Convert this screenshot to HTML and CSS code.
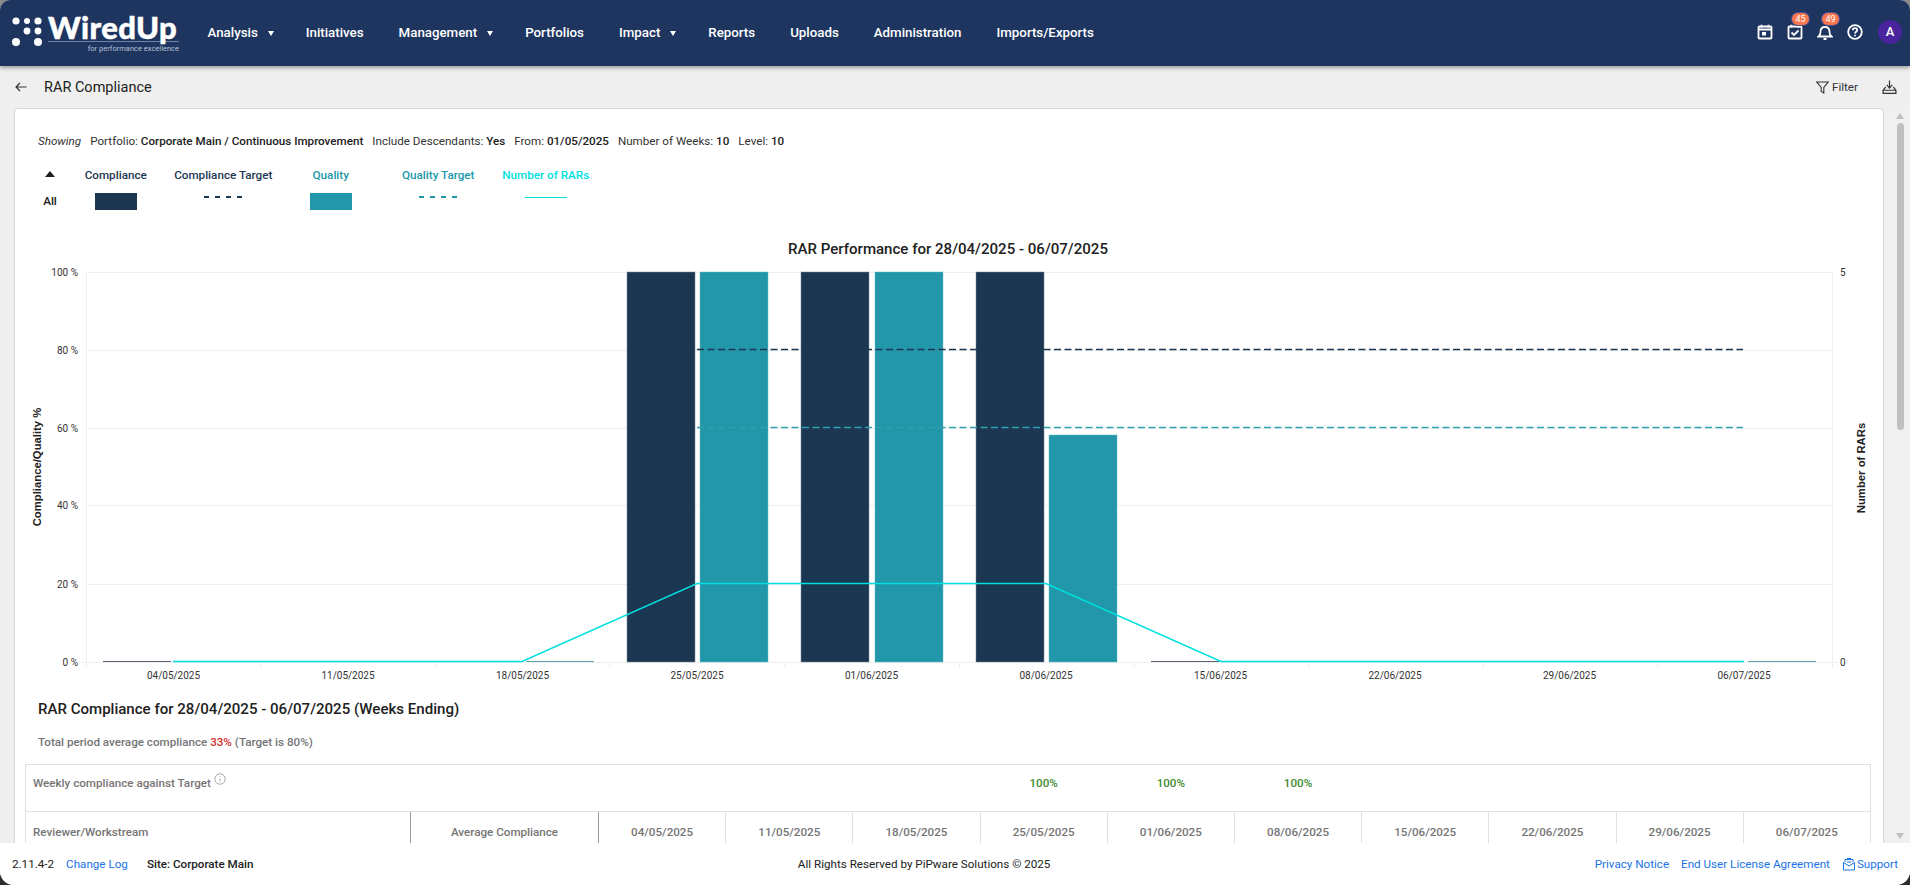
FILE: index.html
```html
<!DOCTYPE html>
<html lang="en">
<head>
<meta charset="utf-8">
<title>RAR Compliance</title>
<link rel="stylesheet" href="styles.css">
</head>
<body>
<div class="app">
  <header class="topbar">
    <div class="logo">
      <svg class="logo-dots" viewBox="0 0 34 30" width="34" height="30">
        <circle cx="4" cy="4" r="3.6"/><circle cx="15" cy="4" r="3"/><circle cx="26" cy="4" r="3.6"/>
        <circle cx="15" cy="14" r="3.4"/><circle cx="26" cy="14" r="3.4"/>
        <circle cx="4" cy="25" r="4"/><circle cx="26" cy="25" r="4"/>
      </svg>
      <div class="logo-text">
        <div class="logo-name">WiredUp</div>
        <div class="logo-tag">for performance excellence</div>
      </div>
    </div>
    <nav class="nav">
      <a class="nav-item">Analysis<span class="caret"></span></a>
      <a class="nav-item">Initiatives</a>
      <a class="nav-item">Management<span class="caret"></span></a>
      <a class="nav-item">Portfolios</a>
      <a class="nav-item">Impact<span class="caret"></span></a>
      <a class="nav-item">Reports</a>
      <a class="nav-item">Uploads</a>
      <a class="nav-item">Administration</a>
      <a class="nav-item">Imports/Exports</a>
    </nav>
    <div class="top-icons">
      <svg class="ticon" viewBox="0 0 16 16" width="16" height="16"><rect x="1.5" y="2.5" width="13" height="12" rx="1"/><path d="M1.5 5.5h13M4.5 .8v3M11.5 .8v3"/><rect class="fill" x="5" y="8" width="4" height="3.5"/></svg>
      <div class="icon-wrap">
        <svg class="ticon" viewBox="0 0 16 16" width="16" height="16"><rect x="1.5" y="2.5" width="13" height="12" rx="1"/><path d="M4.5 .8v3M11.5 .8v3M4.5 8.5l2.5 2.500 4.500-4.500"/></svg>
        <span class="badge">45</span>
      </div>
      <div class="icon-wrap">
        <svg class="ticon" viewBox="0 0 16 16" width="16" height="16"><path d="M1.500 12.500c1.500-1 2-2.500 2-4.500 0-3 1.800-5 4.500-5s4.500 2 4.500 5c0 2 .5 3.500 2 4.500zM6.500 15h3"/></svg>
        <span class="badge">49</span>
      </div>
      <svg class="ticon" viewBox="0 0 16 16" width="16" height="16"><circle cx="8" cy="8" r="6.800"/><path d="M5.800 6.200c0-1.300 1-2.100 2.200-2.100s2.200.8 2.200 2c0 1.700-2.200 1.700-2.200 3.400M8 10.800v1.500"/></svg>
      <div class="avatar">A</div>
    </div>
  </header>

  <div class="subbar">
    <svg class="back" viewBox="0 0 12 10" width="12" height="10"><path d="M11.500 5H1M5 1L1 5l4 4"/></svg>
    <h1 class="page-title">RAR Compliance</h1>
    <div class="sub-actions">
      <span class="filter">
        <svg class="sicon" viewBox="0 0 13 13" width="13" height="13"><path d="M.8 1h11.400L7.800 6.500V12L5.200 10.500V6.500z"/></svg>
        Filter
      </span>
      <svg class="sicon sicon-dl" viewBox="0 0 14 13" width="15" height="14"><path d="M7 .5v6M4.500 4.500L7 7.500l2.500-3M3.500 6.500L1 9.500v3h12v-3l-2.500-3M1 9.500h12"/></svg>
    </div>
  </div>

  <main class="main">
    <section class="card">
      <div class="showing">
        <em>Showing</em>
        <span>Portfolio: <b>Corporate Main / Continuous Improvement</b></span>
        <span>Include Descendants: <b>Yes</b></span>
        <span>From: <b>01/05/2025</b></span>
        <span>Number of Weeks: <b>10</b></span>
        <span>Level: <b>10</b></span>
      </div>

      <div class="legend">
        <div class="lg-head"><span class="tri"></span></div>
        <div class="lg-head c-dark">Compliance</div>
        <div class="lg-head c-dark">Compliance Target</div>
        <div class="lg-head c-teal">Quality</div>
        <div class="lg-head c-teal">Quality Target</div>
        <div class="lg-head c-cyan">Number of RARs</div>
        <div class="lg-cell lg-all">All</div>
        <div class="lg-cell"><span class="swatch bg-dark"></span></div>
        <div class="lg-cell lg-line"><span class="dash dash-dark"></span></div>
        <div class="lg-cell"><span class="swatch bg-teal"></span></div>
        <div class="lg-cell lg-line"><span class="dash dash-teal"></span></div>
        <div class="lg-cell lg-line"><span class="solid"></span></div>
      </div>

      <svg class="chart" viewBox="15 230 1868 460" width="1868" height="460">
        <text class="ch-title" x="948" y="254" text-anchor="middle">RAR Performance for 28/04/2025 - 06/07/2025</text>

        <g class="grid">
          <path d="M86 272.500H1832M86 350.500H1832M86 428.500H1832M86 505.500H1832M86 584.500H1832M82 662.500H1838"/>
          <path d="M86.500 272V662M1832.500 272V662"/>
          <path d="M86.500 662v6M261 662v6M435.500 662v6M610 662v6M785 662v6M959.500 662v6M1134 662v6M1309 662v6M1483 662v6M1657.500 662v6M1832.500 662v6"/>
        </g>

        <g class="tick-y">
          <text x="78" y="275.500">100 %</text>
          <text x="78" y="353.500">80 %</text>
          <text x="78" y="431.500">60 %</text>
          <text x="78" y="508.500">40 %</text>
          <text x="78" y="587.500">20 %</text>
          <text x="78" y="665.500">0 %</text>
        </g>
        <g class="tick-r">
          <text x="1840" y="275.500">5</text>
          <text x="1840" y="665.500">0</text>
        </g>
        <text class="ax-title" transform="translate(41 467) rotate(-90)" text-anchor="middle">Compliance/Quality %</text>
        <text class="ax-title" transform="translate(1865 468) rotate(-90)" text-anchor="middle">Number of RARs</text>

        <g class="zero-dark">
          <path d="M103 661.500h68M278 661.500h68M452 661.500h68M1151 661.500h68M1325 661.500h68M1500 661.500h68M1675 661.500h68"/>
        </g>
        <g class="zero-teal">
          <path d="M176 661.500h68M351 661.500h68M526 661.500h68M1224 661.500h68M1399 661.500h68M1573 661.500h68M1748 661.500h68"/>
        </g>

        <g class="bar-dark">
          <rect x="627" y="272" width="68" height="390"/>
          <rect x="801" y="272" width="68" height="390"/>
          <rect x="976" y="272" width="68" height="390"/>
        </g>
        <g class="bar-teal">
          <rect x="700" y="272" width="68" height="390"/>
          <rect x="875" y="272" width="68" height="390"/>
          <rect x="1049" y="435" width="68" height="227"/>
        </g>

        <path class="tgt-dark" d="M697 349.500H1743"/>
        <path class="tgt-teal" d="M697 427.500H1743"/>
        <path class="rars" d="M173 661.500H522L697 583.500H1046L1221 661.500H1744"/>

        <g class="tick-x">
          <text x="173.500" y="679">04/05/2025</text>
          <text x="348" y="679">11/05/2025</text>
          <text x="522.500" y="679">18/05/2025</text>
          <text x="697" y="679">25/05/2025</text>
          <text x="871.500" y="679">01/06/2025</text>
          <text x="1046" y="679">08/06/2025</text>
          <text x="1220.500" y="679">15/06/2025</text>
          <text x="1395" y="679">22/06/2025</text>
          <text x="1569.500" y="679">29/06/2025</text>
          <text x="1744" y="679">06/07/2025</text>
        </g>
      </svg>

      <h2 class="heading">RAR Compliance for 28/04/2025 - 06/07/2025 (Weeks Ending)</h2>
      <p class="summary">Total period average compliance <span class="red">33%</span> (Target is 80%)</p>

      <table class="tbl">
        <colgroup>
          <col class="col-a"><col class="col-b">
          <col class="col-d"><col class="col-d"><col class="col-d"><col class="col-d"><col class="col-d">
          <col class="col-d"><col class="col-d"><col class="col-d"><col class="col-d"><col class="col-d">
        </colgroup>
        <tr class="row-weekly">
          <td colspan="5" class="left">Weekly compliance against Target
            <svg class="info" viewBox="0 0 12 12" width="12" height="12"><circle cx="6" cy="6" r="5.200"/><path d="M6 5.500v3.200M6 3.200v1"/></svg>
          </td>
          <td class="pct">100%</td><td class="pct">100%</td><td class="pct">100%</td>
          <td></td><td></td><td></td><td></td>
        </tr>
        <tr class="row-head">
          <th class="left strong-r">Reviewer/Workstream</th>
          <th class="strong-r">Average Compliance</th>
          <th>04/05/2025</th><th>11/05/2025</th><th>18/05/2025</th><th>25/05/2025</th><th>01/06/2025</th>
          <th>08/06/2025</th><th>15/06/2025</th><th>22/06/2025</th><th>29/06/2025</th><th>06/07/2025</th>
        </tr>
      </table>
    </section>
    <div class="scrollbar">
      <span class="sb-up"></span>
      <span class="sb-thumb"></span>
      <span class="sb-down"></span>
    </div>
  </main>

  <footer class="footer">
    <div class="f-left">
      <span>2.11.4-2</span>
      <a class="link">Change Log</a>
      <b>Site: Corporate Main</b>
    </div>
    <div>All Rights Reserved by PiPware Solutions © 2025</div>
    <div class="f-right">
      <a class="link">Privacy Notice</a>
      <a class="link">End User License Agreement</a>
      <a class="link support">
        <svg class="sup-icon" viewBox="0 0 14 14" width="14" height="14"><path d="M3 5V2.500h8V5M1.500 5.500L7 9l5.500-3.500V13h-11zM5 1.500h4M5 5h4"/></svg>Support
      </a>
    </div>
  </footer>
</div>
</body>
</html>
```

FILE: styles.css
```css
* { box-sizing: border-box; }
html, body { margin: 0; height: 100%; overflow: hidden; }
body {
  background: linear-gradient(#8a8a8a 0, #8a8a8a 50%, #2e2e2e 50%);
  font-family: Roboto, "Liberation Sans", sans-serif;
  font-size: 11.650px;
  color: #212121;
}
.app {
  height: 885px;
  display: flex;
  flex-direction: column;
  background: #efefef;
  border-radius: 10px 10px 14px 14px;
  overflow: hidden;
}

/* top bar */
.topbar {
  flex: 0 0 66px;
  height: 66px;
  background: #1e3560;
  color: #fff;
  display: flex;
  align-items: center;
  box-shadow: 0 2px 4px rgba(0,0,0,.35);
  position: relative;
  z-index: 2;
  padding-right: 8px;
}
.logo { display: flex; align-items: flex-start; margin-left: 12px; padding-top: 1px; width: 195.500px; }
.logo-dots { fill: #fff; margin-top: 4px; }
.logo-text { margin-left: 2px; width: 131px; }
.logo-name {
  font-family: Lato, "Open Sans", sans-serif;
  font-weight: 900;
  font-size: 31px;
  line-height: 29px;
  letter-spacing: .4px;
  border-bottom: 1px solid #6f83a6;
  height: 29px;
  -webkit-text-stroke: .5px #fff;
}
.logo-tag {
  font-size: 7.500px;
  line-height: 10px;
  margin-top: 2px;
  text-align: right;
  color: #b8c2d4;
}
.nav { display: flex; align-items: center; gap: 35px; margin-top: -1px; }
.nav-item { font-size: 13.300px; font-weight: 500; color: #fff; display: flex; align-items: center; white-space: nowrap; }
.caret {
  margin-left: 10px;
  margin-right: -3px;
  margin-top: 2px;
  border-left: 3.500px solid transparent;
  border-right: 3.500px solid transparent;
  border-top: 5px solid #fff;
}
.top-icons { margin-left: auto; display: flex; align-items: center; gap: 14px; padding-bottom: 2px; }
.ticon { fill: none; stroke: #fff; stroke-width: 1.800; display: block; }
.ticon .fill { fill: #fff; stroke: none; }
.icon-wrap { position: relative; }
.badge {
  position: absolute;
  top: -11px;
  left: 5px;
  width: 17px;
  height: 12px;
  border-radius: 6px;
  background: #f9774e;
  box-shadow: 0 0 0 1px #4d4f93;
  color: #fff;
  font-size: 9px;
  line-height: 12px;
  text-align: center;
}
.avatar {
  width: 24px;
  height: 24px;
  border-radius: 50%;
  background: #4a249c;
  color: #fff;
  font-size: 13px;
  font-weight: 500;
  line-height: 24px;
  text-align: center;
  margin-left: 1px;
}

/* sub bar */
.subbar {
  flex: 0 0 42px;
  height: 42px;
  display: flex;
  align-items: center;
  padding: 0 13px 0 15px;
}
.back { fill: none; stroke: #333; stroke-width: 1.200; }
.page-title { margin: 0 0 0 17px; font-size: 14.500px; font-weight: 400; color: #212121; }
.sub-actions { margin-left: auto; display: flex; align-items: center; gap: 24px; color: #333; }
.filter { display: flex; align-items: center; gap: 3px; font-size: 11.650px; }
.sicon { fill: none; stroke: #333; stroke-width: 1.100; }

/* main */
.main { flex: 1 1 0; min-height: 0; display: flex; overflow: hidden; padding-left: 14px; }
.card {
  flex: 0 0 1870px;
  background: #fff;
  border: 1px solid #d6d6d6;
  border-radius: 4px 4px 0 0;
  padding-top: 24px;
  height: 900px;
}
.showing { margin-left: 23px; display: flex; gap: 9px; line-height: 16px; font-size: 11.650px; color: #333; }
.showing b { font-weight: 500; color: #212121; }

.legend {
  margin: 18px 0 0 23px;
  display: grid;
  grid-template-columns: 24px repeat(5, 107.500px);
  grid-template-rows: 16px 17px;
  row-gap: 10px;
  text-align: center;
}
.lg-head { font-size: 11.700px; font-weight: 500; line-height: 16px; }
.tri {
  display: inline-block;
  vertical-align: 2px;
  border-left: 5px solid transparent;
  border-right: 5px solid transparent;
  border-bottom: 6px solid #212121;
}
.c-dark { color: #1c3751; }
.c-teal { color: #2197a9; }
.c-cyan { color: #00e0e0; }
.lg-cell { display: flex; justify-content: center; }
.lg-all { font-size: 11.700px; font-weight: 500; line-height: 17px; }
.lg-line { padding-top: 3px; }
.swatch { width: 42px; height: 17px; display: block; }
.bg-dark { background: #1c3751; }
.bg-teal { background: #2197a9; }
.dash { width: 38px; height: 2px; display: block; }
.dash-dark { background: repeating-linear-gradient(90deg, #1c3751 0 5px, transparent 5px 11px); }
.dash-teal { background: repeating-linear-gradient(90deg, #2197a9 0 5px, transparent 5px 11px); }
.solid { width: 42px; height: 1px; margin-top: 1px; display: block; background: #00e0e0; }

/* chart */
.chart { display: block; margin-top: 20px; }
.ch-title { font-family: Roboto, sans-serif; font-size: 15.050px; font-weight: 500; fill: #212121; }
.grid path { fill: none; stroke: #efefef; stroke-width: 1; }
.tick-y text { font-family: Roboto, sans-serif; font-size: 10px; fill: #333; text-anchor: end; }
.tick-r text { font-family: Roboto, sans-serif; font-size: 10px; fill: #333; }
.tick-x text { font-family: Roboto, sans-serif; font-size: 10px; fill: #333; text-anchor: middle; }
.ax-title { font-family: "Liberation Sans", sans-serif; font-size: 11.300px; font-weight: 700; fill: #212121; }
.zero-dark path { fill: none; stroke: #5a6673; stroke-width: 1; }
.zero-teal path { fill: none; stroke: #62a5ae; stroke-width: 1; }
.bar-dark rect { fill: #1c3751; stroke: #75879a; stroke-width: .5; }
.bar-teal rect { fill: #2197a9; stroke: #6dbcc8; stroke-width: .5; }
.tgt-dark { fill: none; stroke: #1c3751; stroke-width: 1.500; stroke-dasharray: 7 3.500; }
.tgt-teal { fill: none; stroke: #2fa0b2; stroke-width: 1.500; stroke-dasharray: 7 3.500; }
.rars { fill: none; stroke: #00e0e0; stroke-width: 1.500; }

/* table section */
.heading { margin: 9px 0 0 23px; font-size: 15.050px; line-height: 20px; font-weight: 500; color: #212121; }
.summary { margin: 15px 0 0 23px; font-size: 11.650px; line-height: 16px; font-weight: 500; color: #757575; }
.red { color: #d32f2f; }
.tbl {
  margin: 14px 0 0 10px;
  width: 1846px;
  table-layout: fixed;
  border-collapse: collapse;
  font-size: 11.650px;
  color: #757575;
}
.col-a { width: 385px; }
.col-b { width: 188px; }
.tbl td, .tbl th { font-weight: 500; text-align: center; border: 1px solid #e0e0e0; padding: 12px 7px; line-height: 16px; }
.row-weekly td { height: 47px; vertical-align: top; padding-top: 10px; border-left: 0; border-right: 0; }
.row-weekly td:first-child { border-left: 1px solid #e0e0e0; }
.row-weekly td:last-child { border-right: 1px solid #e0e0e0; }
.tbl .left { text-align: left; }
.tbl .strong-r { border-right: 1px solid #9a9a9a; }
.tbl .pct { color: #3c8a2e; }
.info { fill: none; stroke: #aaa; stroke-width: 1; vertical-align: top; margin-top: -2px; }

/* scrollbar */
.scrollbar {
  flex: 1 1 0;
  display: flex;
  flex-direction: column;
  align-items: center;
  padding: 5px 0 4px 6px;
  background: #f0f0f0;
}
.sb-up { border-left: 4px solid transparent; border-right: 4px solid transparent; border-bottom: 6px solid #c0c0c0; }
.sb-thumb { width: 7px; height: 307px; margin-top: 4px; border-radius: 4px; background: #c0c0c0; }
.sb-down { margin-top: auto; border-left: 4px solid transparent; border-right: 4px solid transparent; border-top: 6px solid #c0c0c0; }

/* footer */
.footer {
  flex: 0 0 42px;
  height: 42px;
  background: #fff;
  display: flex;
  align-items: center;
  justify-content: space-between;
  padding: 0 12px;
  font-size: 11.650px;
  color: #212121;
  position: relative;
}
.f-left { display: flex; gap: 12px; align-items: center; }
.f-left b { font-weight: 500; margin-left: 7px; }
.f-right { display: flex; gap: 12px; align-items: center; }
.link { color: #1a73e8; }
.support { display: flex; align-items: center; gap: 1px; }
.sup-icon { fill: none; stroke: #1a73e8; stroke-width: 1; }
```
